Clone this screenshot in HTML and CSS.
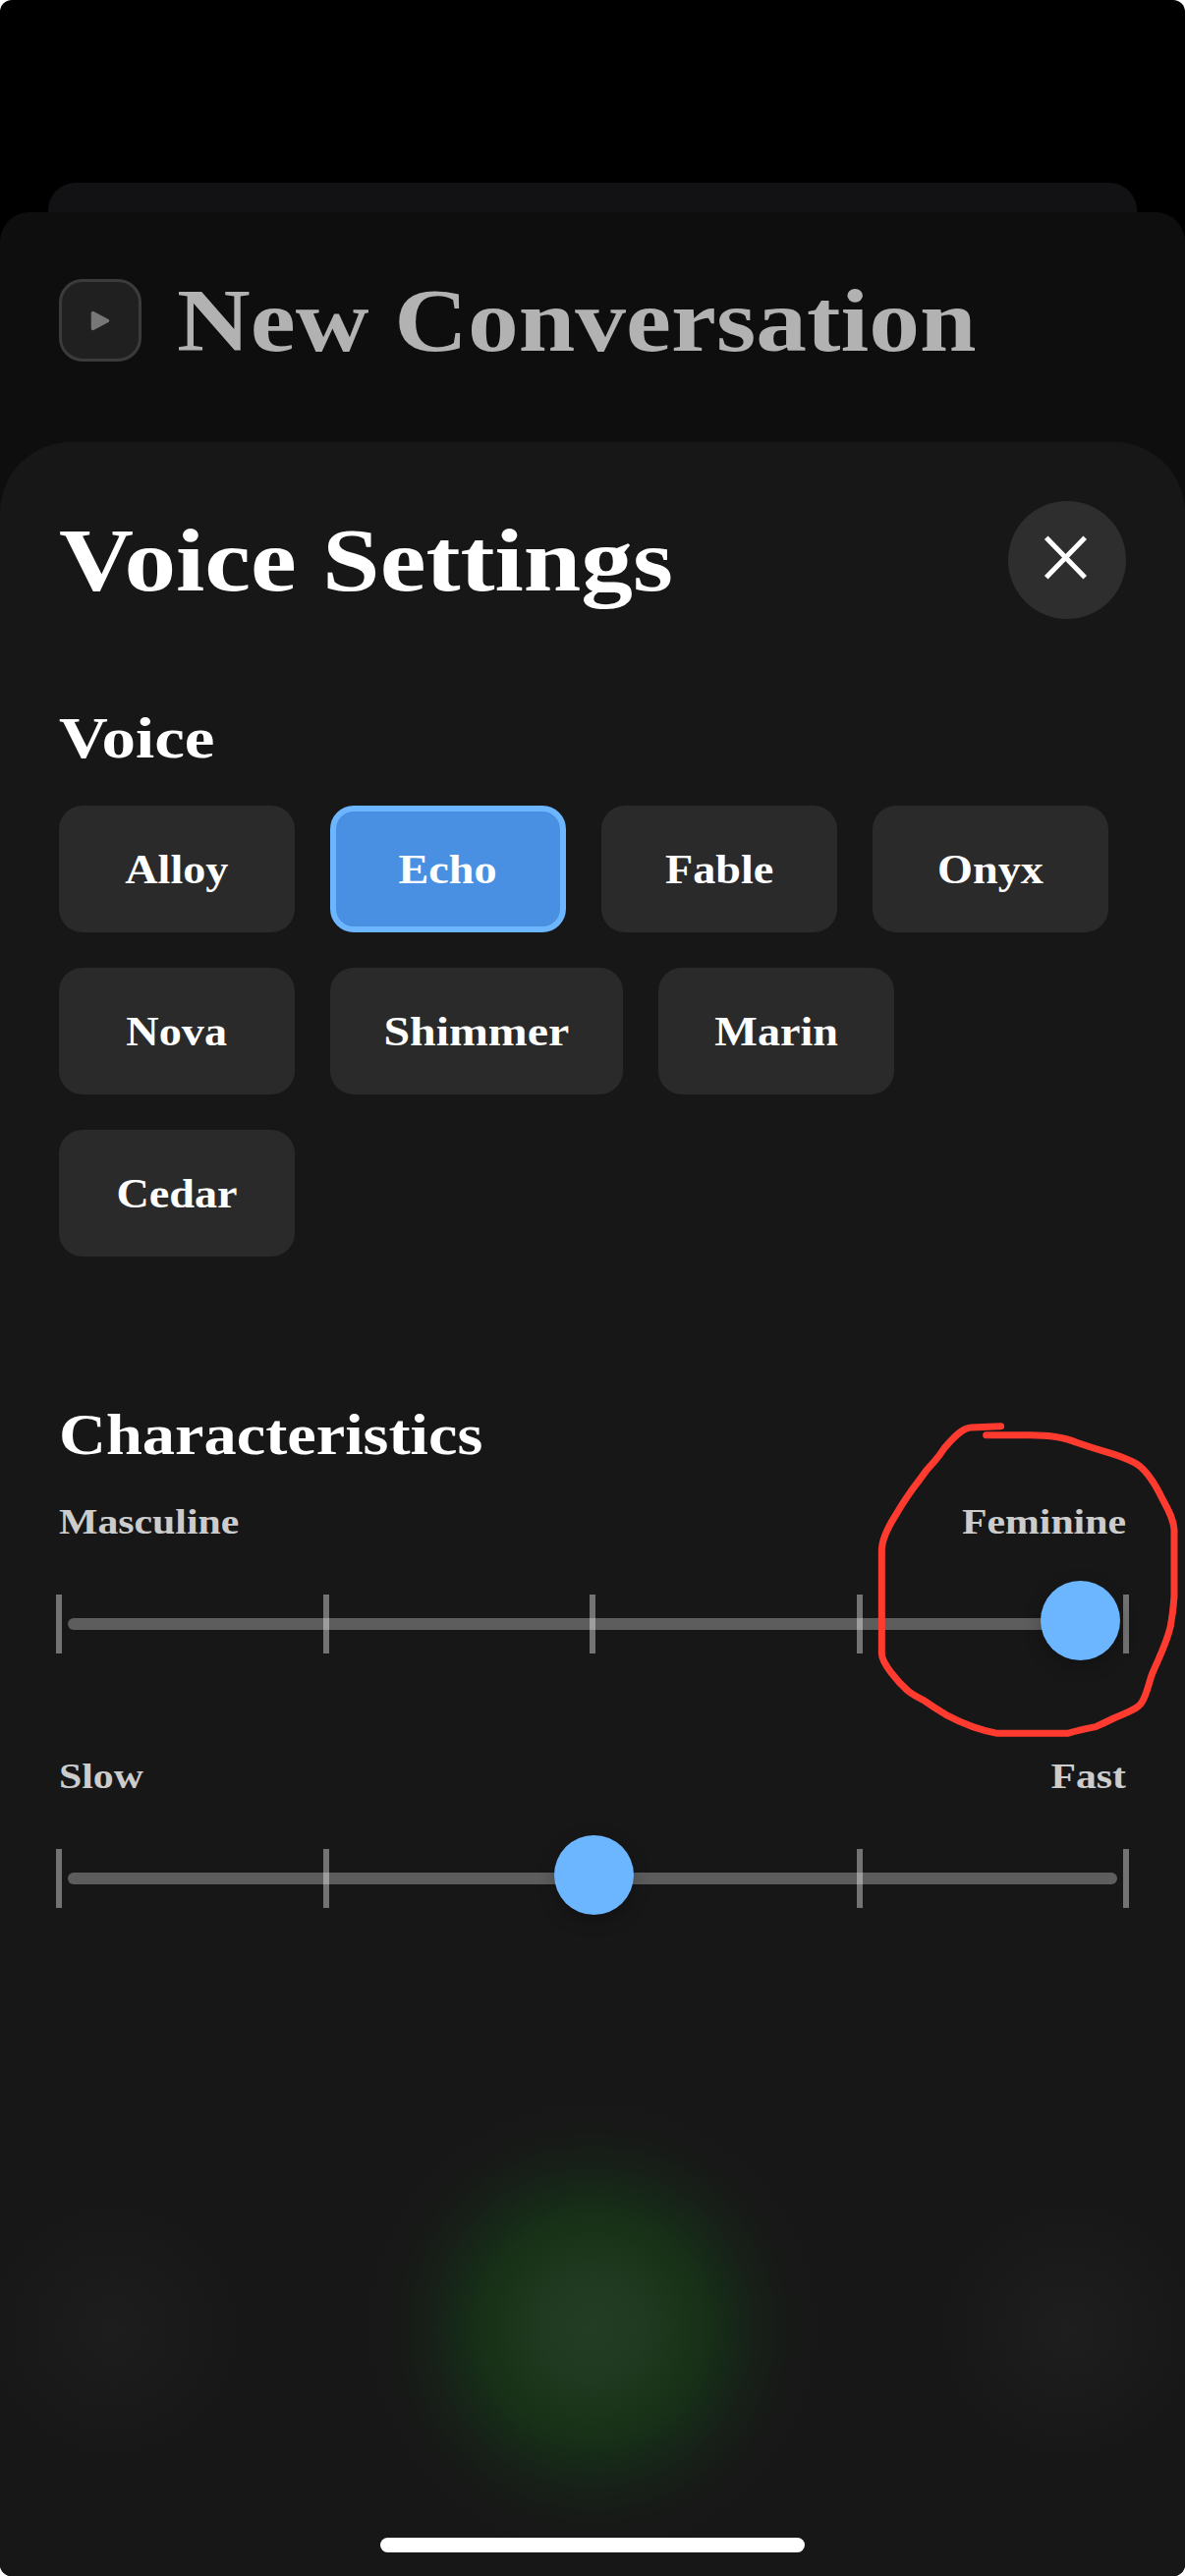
FILE: index.html
```
<!DOCTYPE html>
<html lang="en">
<head>
<meta charset="utf-8">
<title>Voice Settings</title>
<link rel="stylesheet" href="styles.css">
</head>
<body>
<div class="screen">
  <div class="back-sheet"></div>
  <div class="conversation-sheet">
    <header class="conversation-header">
      <span class="play-button">
        <svg width="84" height="84" viewBox="0 0 84 84"><path d="M34.500 34.500v16l15-8z" fill="#777" stroke="#777" stroke-width="3.5" stroke-linejoin="round"/></svg>
      </span>
      <h2 class="title dimmed">New Conversation</h2>
    </header>
    <main class="settings-sheet">
      <header class="settings-header">
        <h1 class="title settings-title">Voice Settings</h1>
        <button class="close" aria-label="Close">
          <svg width="120" height="120" viewBox="0 0 120 120"><path d="M40.500 39 76.500 76M76.500 39 40.500 76" stroke="#fff" stroke-width="5"  stroke-linecap="square"/></svg>
        </button>
      </header>
      <h3 class="section-title">Voice</h3>
      <div class="voices">
        <button class="chip"><span>Alloy</span></button>
        <button class="chip selected"><span>Echo</span></button>
        <button class="chip"><span>Fable</span></button>
        <button class="chip"><span>Onyx</span></button>
        <button class="chip"><span>Nova</span></button>
        <button class="chip wide"><span>Shimmer</span></button>
        <button class="chip"><span>Marin</span></button>
        <button class="chip"><span>Cedar</span></button>
      </div>
      <h3 class="section-title characteristics">Characteristics</h3>
      <section class="characteristic">
        <div class="labels"><span>Masculine</span><span class="end">Feminine</span></div>
        <div class="slider">
          <div class="track"></div>
          <div class="ticks"><i></i><i></i><i></i><i></i><i></i></div>
          <div class="thumb maximum"></div>
        </div>
      </section>
      <section class="characteristic">
        <div class="labels"><span>Slow</span><span class="end">Fast</span></div>
        <div class="slider">
          <div class="track"></div>
          <div class="ticks"><i></i><i></i><i></i><i></i><i></i></div>
          <div class="thumb middle"></div>
        </div>
      </section>
      <footer class="home-area"><div class="home-indicator"></div></footer>
    </main>
  </div>
  <svg class="annotation" viewBox="0 0 1068 1110" fill="none">
    <path d="M506 95L415 99C383 101 352 141 334 161Q319 184 305 200Q280 225 258 258Q220 306 185 366C160 405 142 445 142 475V790C142 818 190 875 222 903Q240 917 270 932Q300 953 338 976C385 1001 440 1023 495 1033H710Q740 1024 795 1013Q820 1002 850 987C885 971 922 960 935 940C953 914 958 873 970 846C990 799 1013 755 1024 705Q1032 660 1035 615V410C1032 369 1008 337 990 299C965 252 943 221 913 206Q875 187 825 173Q785 161 735 144C692 125 645 122 595 122H461" stroke="#ff3b30" stroke-width="21" stroke-linecap="round" stroke-linejoin="round"/>
  </svg>
</div>
</body>
</html>
```
FILE: styles.css
```
* { box-sizing: border-box; }

body {
  margin: 0;
  background: #fff;
  font-family: Georgia, "Liberation Serif", serif;
  font-weight: 700;
  color: #fff;
}

h1, h2, h3 { margin: 0; font-weight: 700; }

button {
  padding: 0;
  border: 0;
  font: inherit;
  color: inherit;
}

.screen {
  position: relative;
  display: flex;
  flex-direction: column;
  width: 1206px;
  height: 2622px;
  padding-top: 186px;
  overflow: hidden;
  background: #000;
  border-radius: 12px;
}

.back-sheet {
  flex: none;
  height: 60px;
  margin: 0 49px -30px;
  background: #121214;
  border-radius: 28px 28px 0 0;
}

.conversation-sheet {
  display: flex;
  flex: 1;
  flex-direction: column;
  z-index: 1;
  background: #0e0e0e;
  border-radius: 30px 30px 0 0;
}

.conversation-header {
  display: flex;
  flex: none;
  align-items: center;
  gap: 36px;
  height: 234px;
  padding: 0 60px 14px;
}

.play-button {
  display: flex;
  width: 84px;
  height: 84px;
  background: #202020;
  border: 3px solid #3b3b3b;
  border-radius: 24px;
}

.play-button svg { margin: -3px; }

.title {
  padding-top: 2px;
  font-size: 90px;
  line-height: 100px;
  white-space: nowrap;
  transform: scaleX(1.15);
  transform-origin: left;
}

.settings-title { transform: scaleX(1.17); }

.dimmed { color: #b2b2b2; }

.settings-sheet {
  display: flex;
  flex: 1;
  flex-direction: column;
  padding: 60px 60px 0;
  background:
    radial-gradient(circle at 603px 1919px, #223d23 0, #1f3a20 50px, #1a351a 85px, #173017 115px, #162818 140px, #172018 165px, #171917 200px, rgba(23, 23, 23, 0) 235px),
    radial-gradient(circle 135px at 115px 1922px, #1d1d1d, rgba(23, 23, 23, 0)),
    radial-gradient(circle 135px at 1087px 1922px, #1e1e1e, rgba(23, 23, 23, 0)),
    #171717;
  border-radius: 72px 72px 0 0;
}

.settings-header {
  display: flex;
  align-items: center;
  justify-content: space-between;
  height: 120px;
  margin-bottom: 91px;
}

.close {
  display: flex;
  width: 120px;
  height: 120px;
  background: #2e2e2e;
  border-radius: 50%;
}

.section-title {
  align-self: flex-start;
  font-size: 59px;
  line-height: 60px;
  transform: scaleX(1.17);
  transform-origin: left;
}

.voices {
  display: flex;
  flex-wrap: wrap;
  gap: 36px;
  margin-top: 39px;
}

.chip {
  width: 240px;
  height: 129px;
  background: #2a2a2a;
  border-radius: 24px;
  font-size: 42px;
  line-height: 60px;
}

.chip span {
  display: inline-block;
  transform: scaleX(1.1);
}

.wide { width: 298px; }

.wide span { transform: scaleX(1.14); }

.selected {
  background: #4a90e2;
  border: 6px solid #6cb5ff;
}

.characteristics {
  margin: 151px 0 39px;
  transform: scaleX(1.125);
}

.characteristic { margin-bottom: 105px; }

.labels {
  display: flex;
  justify-content: space-between;
  color: #ccc;
  font-size: 36px;
  line-height: 40px;
}

.labels span {
  transform: scaleX(1.16);
  transform-origin: left;
}

.labels .end { transform-origin: right; }

.slider {
  position: relative;
  display: grid;
  align-items: center;
  height: 60px;
  margin: 54px -3px 0;
}

.slider > * { grid-area: 1 / 1; }

.track {
  height: 12px;
  margin: 0 12px;
  background: rgba(255, 255, 255, 0.3);
  border-radius: 6px;
}

.ticks {
  display: flex;
  justify-content: space-between;
}

.ticks i {
  width: 6px;
  height: 60px;
  background: rgba(255, 255, 255, 0.4);
}

.thumb {
  position: absolute;
  top: -14px;
  width: 81px;
  height: 81px;
  background: #6cb5ff;
  border-radius: 50%;
  box-shadow: 0 6px 18px rgba(0, 0, 0, 0.25);
}

.middle { left: 507px; }

.maximum { left: 1002px; }

.home-area {
  display: flex;
  justify-content: center;
  margin-top: auto;
  padding-bottom: 24px;
}

.home-indicator {
  width: 432px;
  height: 15px;
  background: #fff;
  border-radius: 8px;
}

.annotation {
  position: absolute;
  z-index: 2;
  top: 1420px;
  left: 850px;
  width: 356px;
  height: 370px;
}
```
